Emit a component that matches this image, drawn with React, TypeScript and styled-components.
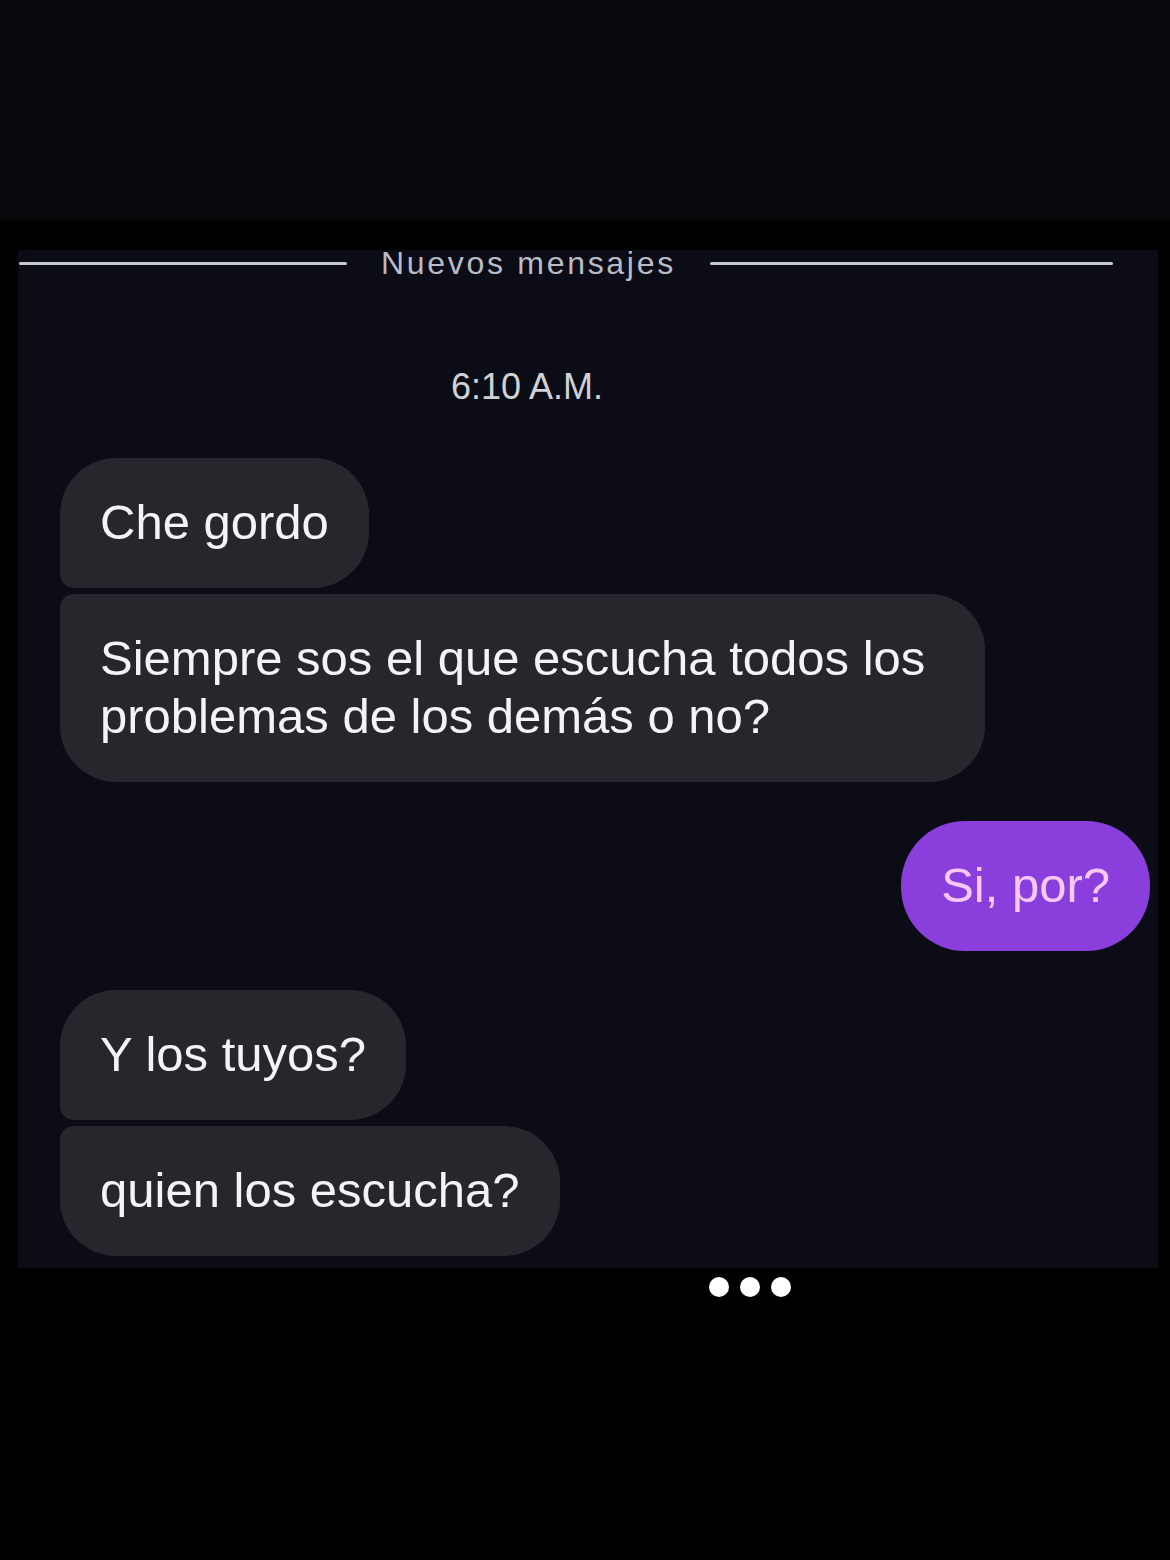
import React from "react";
import styled, {createGlobalStyle} from "styled-components";

const GlobalStyle = createGlobalStyle`
  html, body {
    margin: 0;
    padding: 0;
    background: #000;
  }

  body {
    font-family: "Liberation Sans", Arial, sans-serif;
    -webkit-font-smoothing: antialiased;
  }
`

const Screen = styled.div`
  width: 1170px;
  min-height: 1560px;
  background: #000;
  overflow: hidden;
`

const TopBar = styled.div`
  height: 220px;
  background: #07070c;
`

const Panel = styled.div`
  margin: 30px 12px 0 18px;
  height: 1018px;
  background: #0b0c15;
  display: flex;
  flex-direction: column;
`

const DividerRow = styled.div`
  display: flex;
  align-items: center;
  gap: 34px;
  height: 30px;
  margin-top: -2px;
  padding-left: 1px;
`

const Rule = styled.div<{ $width: number }>`
  width: ${p => p.$width}px;
  height: 3px;
  border-radius: 2px;
  background: #c4c7cf;
`

const DividerLabel = styled.span`
  font-size: 32px;
  line-height: 30px;
  letter-spacing: 2.7px;
  color: #b9bcc6;
  white-space: nowrap;
`

const TimeStamp = styled.div`
  width: 1018px;
  margin-top: 89px;
  text-align: center;
  font-size: 36px;
  line-height: 40px;
  color: #d0d1d6;
`

const Thread = styled.div`
  display: flex;
  flex-direction: column;
  margin-top: 51px;
  padding: 0 8px 0 42px;
`

const Group = styled.div<{ $mine?: boolean }>`
  display: flex;
  flex-direction: column;
  align-items: ${p => (p.$mine ? "flex-end" : "flex-start")};
  gap: 6px;
  margin-bottom: 39px;
`

const Bubble = styled.div<{ $mine?: boolean; $pos: "single" | "first" | "last" }>`
  box-sizing: border-box;
  max-width: 925px;
  padding: 35px 40px 37px;
  font-size: 49px;
  line-height: 58px;
  background: ${p => (p.$mine ? "#8a3fdc" : "#26262d")};
  color: ${p => (p.$mine ? "#f6c9f4" : "#f4f4f6")};
  border-radius: ${p =>
    p.$pos === "first" ? "56px 56px 56px 14px" :
      p.$pos === "last" ? "14px 56px 56px 56px" : "64px"};
`

const Typing = styled.div`
  display: flex;
  gap: 11px;
  margin: 9px 0 0 709px;
`

const Dot = styled.span`
  width: 20px;
  height: 20px;
  border-radius: 50%;
  background: #fff;
`

type Message = { text: string; mine?: boolean }

const groups: Message[][] = [
    [
        {text: "Che gordo"},
        {text: "Siempre sos el que escucha todos los problemas de los demás o no?"},
    ],
    [
        {text: "Si, por?", mine: true},
    ],
    [
        {text: "Y los tuyos?"},
        {text: "quien los escucha?"},
    ],
]

function App() {
    return (
        <Screen>
            <GlobalStyle/>
            <TopBar/>
            <Panel>
                <DividerRow>
                    <Rule $width={328}/>
                    <DividerLabel>Nuevos mensajes</DividerLabel>
                    <Rule $width={403}/>
                </DividerRow>
                <TimeStamp>6:10 A.M.</TimeStamp>
                <Thread>
                    {groups.map((group, gi) => {
                        const mine = group[0].mine
                        return (
                            <Group key={gi} $mine={mine}>
                                {group.map((msg, i) => {
                                    const pos = group.length === 1 ? "single" : i === 0 ? "first" : "last"
                                    return (
                                        <Bubble key={i} $mine={msg.mine} $pos={pos}>
                                            {msg.text}
                                        </Bubble>
                                    )
                                })}
                            </Group>
                        )
                    })}
                </Thread>
            </Panel>
            <Typing>
                <Dot/>
                <Dot/>
                <Dot/>
            </Typing>
        </Screen>
    );
}

export default App;
